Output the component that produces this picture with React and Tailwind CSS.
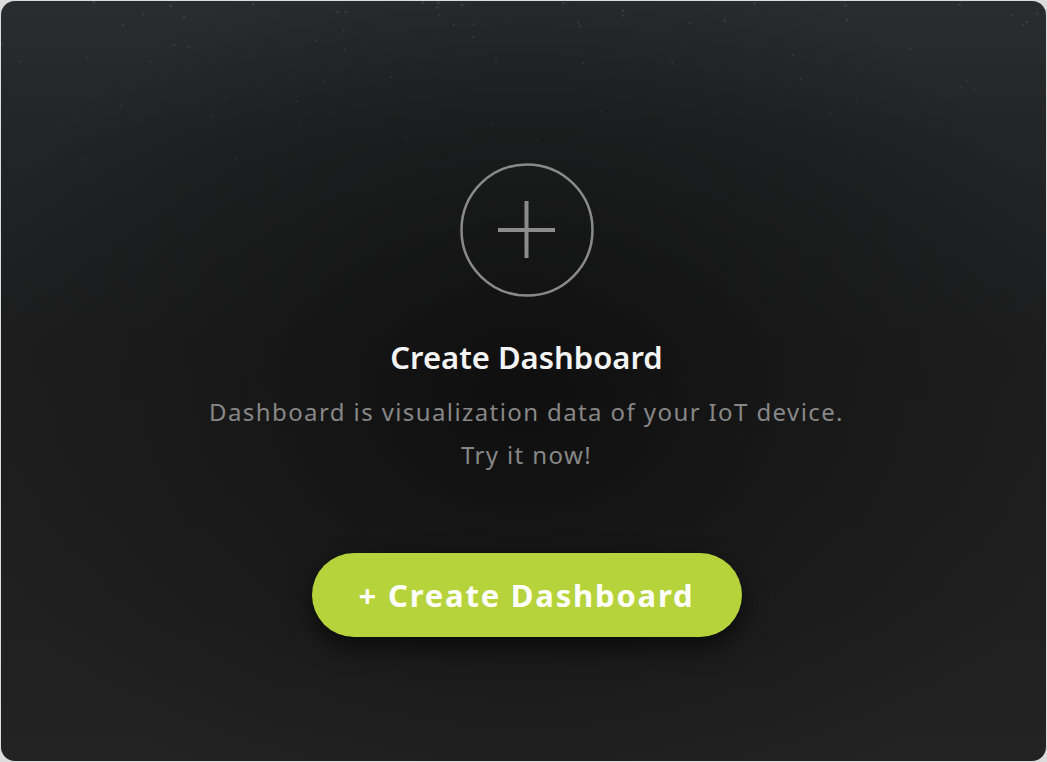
// faint speckles along the top edge of the panel
const specks = Array.from({ length: 70 }, (_, i) => {
    const a = Math.sin(i * 12.9898) * 43758.5453
    const b = Math.sin(i * 78.233) * 12345.6789
    const x = (a - Math.floor(a)) * 1040
    const yr = b - Math.floor(b)
    return { x, y: yr * yr * 170, o: 0.06 + (1 - yr) * 0.12 }
})

export default function App() {
    return (
        <div className="flex h-[762px] w-[1047px] items-stretch bg-[#dcdcdc] p-[1px]">
            <div
                className="relative flex flex-1 flex-col items-center overflow-hidden rounded-[14px] bg-[radial-gradient(ellipse_55%_60%_at_50%_52%,rgba(14,14,14,0.95)_0%,rgba(20,20,20,0.6)_50%,rgba(20,20,20,0)_100%),linear-gradient(180deg,#2a2d2f_0%,#222425_18%,#1e1e1f_45%,#202020_80%,#232323_100%)] pl-[6px]"
                style={{ fontFamily: '"Noto Sans", "DejaVu Sans", sans-serif' }}
            >
                <svg className="pointer-events-none absolute left-0 top-0" width="1045" height="200">
                    {specks.map((s, i) => (
                        <rect key={i} x={s.x} y={s.y} width="2.5" height="2.5" rx="1" fill="#9aa8b0" opacity={s.o} />
                    ))}
                </svg>

                {/* Circle with plus */}
                <svg className="relative mt-[161px]" width="136" height="136" viewBox="0 0 136 136">
                    <circle cx="68" cy="68" r="65.5" fill="none" stroke="#8a8a8a" strokeWidth="2.5" />
                    <path d="M39 68H96M67.5 39V96" stroke="#8c8c8c" strokeWidth="4" />
                </svg>

                <h1 className="relative mt-[41px] text-[31px] leading-[36px] font-semibold text-[#f4f4f4]">Create Dashboard</h1>
                <p className="relative mt-[15px] text-center text-[24px] leading-[43px] tracking-[1.4px] text-[#878787]">
                    Dashboard is visualization data of your IoT device.
                    <br />
                    Try it now!
                </p>

                <button
                    type="button"
                    className="relative mt-[77px] flex h-[84px] w-[430px] items-center justify-center rounded-full bg-[#b6d33c] text-[31px] font-bold tracking-[1.8px] text-white shadow-[0_10px_24px_rgba(0,0,0,0.6)]"
                >
                    + Create Dashboard
                </button>
            </div>
        </div>
    )
}
